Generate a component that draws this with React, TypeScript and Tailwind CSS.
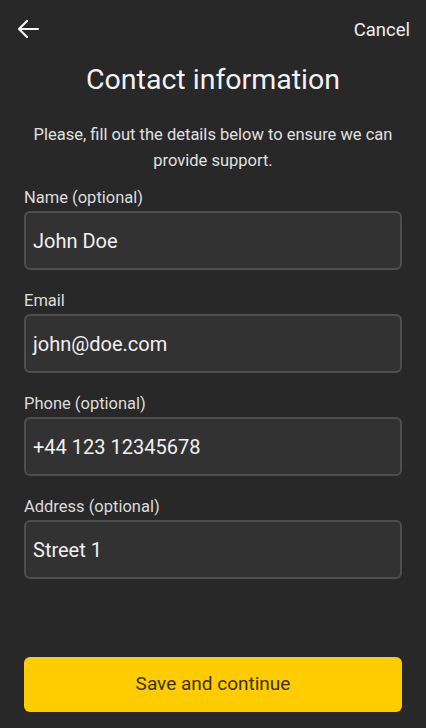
const fields = [
  { label: "Name (optional)", value: "John Doe" },
  { label: "Email", value: "john@doe.com" },
  { label: "Phone (optional)", value: "+44 123 12345678" },
  { label: "Address (optional)", value: "Street 1" },
];

export default function App() {
  return (
    <div
      className="flex flex-col h-[728px] w-full bg-[#282828] text-[#ececec] overflow-hidden"
      style={{ fontFamily: "Roboto, 'Noto Sans', Arial, sans-serif" }}
    >
      {/* Header */}
      <div className="flex items-center justify-between h-[24px] mt-[17px] pl-[17px] pr-[16px]">
        <svg width="23" height="20" viewBox="0 0 23 20" fill="none">
          <path
            d="M21 10H2M10 2L2 10L10 18"
            stroke="#f2f2f2"
            strokeWidth="2.2"
            strokeLinecap="round"
            strokeLinejoin="round"
          />
        </svg>
        <span className="text-[18.5px] leading-[24px] text-[#eeeeee] mt-[2px]">Cancel</span>
      </div>

      <h1 className="mt-[22px] text-center text-[28.5px] leading-[34px] text-[#f2f2f2]">
        Contact information
      </h1>

      <p className="mt-[25px] px-[26px] text-center text-[16.5px] leading-[26px] text-[#e0e0e0]">
        Please, fill out the details below to ensure we can provide support.
      </p>

      {/* Form */}
      <div className="mt-[14px] px-[24px] flex flex-col gap-[21px]">
        {fields.map((f, i) => (
          <div key={i} className="flex flex-col gap-[3px]">
            <label className="text-[16.5px] leading-[20px] text-[#dcdcdc]">{f.label}</label>
            <div className="h-[59px] flex items-center px-[7px] rounded-[6px] border-2 border-[#4e4e4e] bg-[#323232] text-[20px] text-[#f0f0f0]">
              {f.value}
            </div>
          </div>
        ))}
      </div>

      <div className="mt-auto mb-[16px] px-[24px]">
        <button className="w-full h-[55px] rounded-[6px] bg-[#ffcc00] text-[19px] text-[#3b3200]">
          Save and continue
        </button>
      </div>
    </div>
  );
}
